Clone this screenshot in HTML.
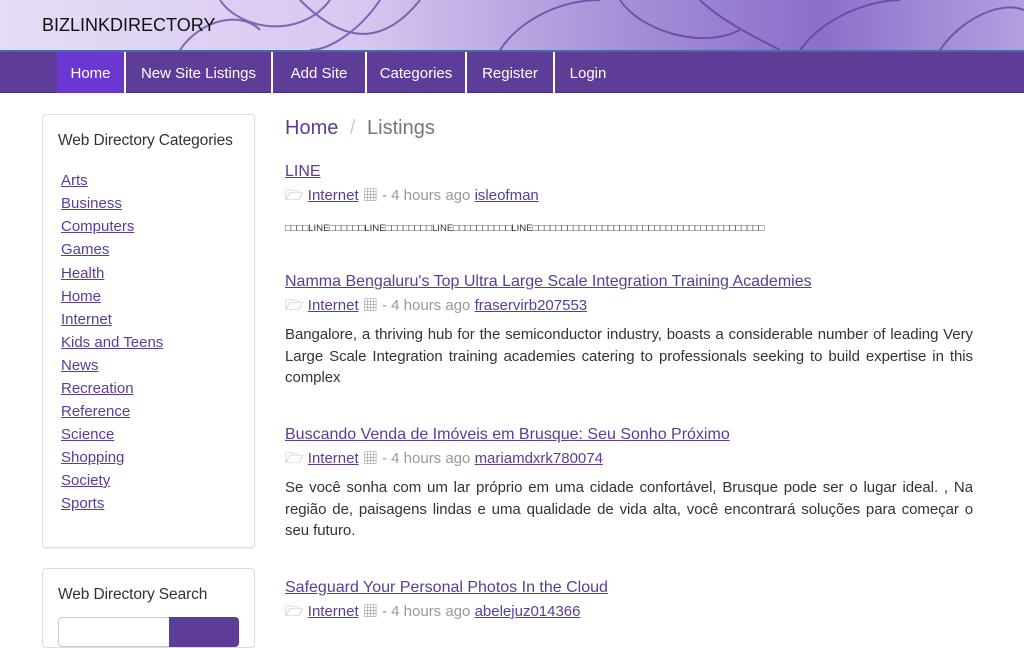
<!DOCTYPE html>
<html><head><meta charset="utf-8"><style>
*{box-sizing:border-box}
body{margin:0;width:1024px;height:629px;overflow:hidden;background:#fff;font-family:"Liberation Sans","Noto Sans CJK JP",sans-serif;color:#333;font-size:14px}
.hdr{position:absolute;left:0;top:0;width:1024px;height:50px;background:linear-gradient(90deg,#e6dcf7 0%,#d7c8f0 35%,#a792d8 60%,#8a6fcb 80%,#b3a0e0 100%);overflow:hidden}
.hdr svg{position:absolute;left:0;top:0}
.hdr .t{position:absolute;left:42px;top:15px;font-size:18px;color:#111}
.nav{position:absolute;left:0;top:50px;width:1024px;height:43px;background:#5e3d99;border-top:2px solid #3f6f9f;border-bottom:1px solid #4a2f7f}
.nav a{position:absolute;top:0;height:41px;line-height:43px;color:#fff;text-decoration:none;font-size:15px;text-align:center;border-right:2px solid #fff}
.side{position:absolute;left:42px;width:213px;border:1px solid #ddd;border-radius:4px;background:#fff;box-shadow:0 1px 1px rgba(0,0,0,.05)}
.side h3{margin:0;font-weight:normal;font-size:15.5px;color:#333;position:absolute;left:15px;letter-spacing:-.1px}
.side a{position:absolute;left:18px;color:#5b3c99;font-size:15px;text-decoration:underline}
a{color:#5b3c99}
.it{position:absolute;left:285px;width:688px}
.it .ti{font-size:16px;color:#5b3c99;text-decoration:underline}
.meta{font-size:15px;color:#999;margin-top:3px}
.meta a{color:#5b3c99;text-decoration:underline}
.d{font-size:15px;line-height:21.5px;text-align:justify;margin-top:4px;color:#333;letter-spacing:-.05px}
</style></head><body>
<div class="hdr">
<svg width="1024" height="50"><g fill="none" stroke="#5a3a9a" stroke-width="2" opacity=".7">
<path d="M180 50 C200 20 240 10 260 30"/><path d="M220 0 C240 30 300 40 330 0"/><path d="M300 0 C340 40 380 50 420 0"/><path d="M380 0 C360 30 330 50 310 50"/><path d="M500 50 C520 20 560 0 600 0"/><path d="M620 0 C640 30 700 50 740 30"/><path d="M800 50 C830 10 880 0 900 0"/><path d="M940 50 C960 20 1000 0 1024 10"/><path d="M700 0 C720 20 760 40 780 50"/></g></svg>
<div class="t">BIZLINKDIRECTORY</div></div>
<div class="nav">
<a style="left:57px;width:69px;background:#6c36d0">Home</a>
<a style="left:126px;width:147px">New Site Listings</a>
<a style="left:273px;width:94px">Add Site</a>
<a style="left:367px;width:100px">Categories</a>
<a style="left:467px;width:88px">Register</a>
<a style="left:555px;width:66px;border:none">Login</a>
</div>
<div class="side" style="top:114px;height:434px"><h3 style="top:17px">Web Directory Categories</h3>
<a style="top:57px">Arts</a><a style="top:80px">Business</a><a style="top:103px">Computers</a><a style="top:126px">Games</a><a style="top:150px">Health</a><a style="top:173px">Home</a><a style="top:196px">Internet</a><a style="top:219px">Kids and Teens</a><a style="top:242px">News</a><a style="top:265px">Recreation</a><a style="top:288px">Reference</a><a style="top:311px">Science</a><a style="top:334px">Shopping</a><a style="top:357px">Society</a><a style="top:380px">Sports</a></div>
<div class="side" style="top:568px;height:80px"><h3 style="top:17px">Web Directory Search</h3>
<div style="position:absolute;left:15px;top:48px;width:112px;height:30px;border:1px solid #ccc;border-radius:4px 0 0 4px"></div>
<div style="position:absolute;left:126px;top:48px;width:70px;height:30px;background:#5e3d99;border-radius:0 4px 4px 0"></div></div>
<div style="position:absolute;left:285px;top:117px;font-size:20px;color:#777"><span style="color:#5b3c99">Home</span> <span style="color:#ccc;margin:0 6px">/</span> Listings</div>
<div class="it" style="top:163px"><div class="ti">LINE</div><div class="meta">🗁 <a>Internet</a> ▦ - 4 hours ago <a>isleofman</a></div><div class="d" style="font-size:9.6px;letter-spacing:0;margin-top:8px">□□□□LINE□□□□□□LINE□□□□□□□□LINE□□□□□□□□□□LINE□□□□□□□□□□□□□□□□□□□□□□□□□□□□□□□□□□□□□□□□</div></div>
<div class="it" style="top:273px"><div class="ti">Namma Bengaluru's Top Ultra Large Scale Integration Training Academies</div><div class="meta">🗁 <a>Internet</a> ▦ - 4 hours ago <a>fraservirb207553</a></div><div class="d">Bangalore, a thriving hub for the semiconductor industry, boasts a considerable number of leading Very Large Scale Integration training academies catering to professionals seeking to build expertise in this complex</div></div>
<div class="it" style="top:426px"><div class="ti">Buscando Venda de Imóveis em Brusque: Seu Sonho Próximo</div><div class="meta">🗁 <a>Internet</a> ▦ - 4 hours ago <a>mariamdxrk780074</a></div><div class="d">Se você sonha com um lar próprio em uma cidade confortável, Brusque pode ser o lugar ideal. , Na região de, paisagens lindas e uma qualidade de vida alta, você encontrará soluções para começar o seu futuro.</div></div>
<div class="it" style="top:579px"><div class="ti">Safeguard Your Personal Photos In the Cloud</div><div class="meta">🗁 <a>Internet</a> ▦ - 4 hours ago <a>abelejuz014366</a></div></div>
</body></html>
